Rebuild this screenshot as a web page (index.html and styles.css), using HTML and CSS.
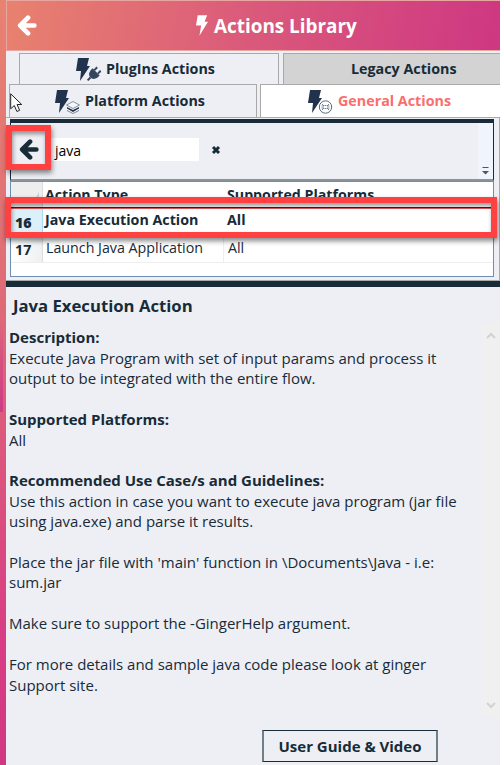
FILE: index.html
```html
<!DOCTYPE html>
<html lang="en">
<head>
<meta charset="utf-8">
<title>Actions Library</title>
<link rel="stylesheet" href="styles.css">
</head>
<body>
<svg width="0" height="0" class="defs">
  <defs>
    <symbol id="arrow" viewBox="0 0 20 20"><path d="M11.500 2.500 4 10l7.500 7.500M5 10h12.500" fill="none" stroke="currentColor" stroke-width="4.400" stroke-linecap="round" stroke-linejoin="round"/></symbol>
    <symbol id="bolt" viewBox="0 0 14 24"><path d="M2 0H13L10 7.500H14L4 24 6 12H0Z" fill="currentColor"/></symbol>
  </defs>
</svg>
<div class="window">
  <aside class="rail"><i></i></aside>
  <main class="panel">
    <header class="titlebar">
      <svg class="back"><use href="#arrow"/></svg>
      <svg class="title-bolt"><use href="#bolt"/></svg>
      <h1>Actions Library</h1>
    </header>
    <nav class="tabs">
      <div class="tab-row upper">
        <div class="tab plugins">
          <svg class="tab-icon" viewBox="0 0 26 25"><path d="M3 1h11l-2 8h3L5 24l1-10H1Z" fill="#21324d"/><g transform="translate(19 17) rotate(45)" fill="#34455d"><path d="M-5-3H5V0Q4 5 0 5T-5 0Z"/><path d="M-3.500-7h2v4h-2zM1.500-7h2v4h-2zM-1 5h2v4h-2z"/></g></svg>
          <span>PlugIns Actions</span>
        </div>
        <div class="tab legacy"><span>Legacy Actions</span></div>
      </div>
      <div class="tab-row lower">
        <div class="tab platform">
          <svg class="tab-icon" viewBox="0 0 26 25"><path d="M3 1h11l-2 8h3L5 24l1-10H1Z" fill="#21324d"/><path d="m12.500 16 6.500-3.500 6.500 3.500-6.500 3.500Z" fill="#f5f6fa" stroke="#8791a0"/><path d="m13 18 6 3 6-3v1.500L19 23l-6-3.500Z" fill="#21324d"/><path d="m13 21.500 6 3 6-3" fill="none" stroke="#7e8998"/></svg>
          <span>Platform Actions</span>
        </div>
        <div class="tab general">
          <svg class="tab-icon" viewBox="0 0 26 25"><path d="M3 1h11l-2 8h3L5 24l1-10H1Z" fill="#21324d"/><circle cx="18.500" cy="18" r="6.200" fill="#fff" stroke="#5c687d"/><path d="M15 15l2 2h-2.500m7.500-2-2 2h2.500M15 21l2-2h-2.500m7.500 2-2-2h2.500M17.500 16.500h2m-2 3h2" fill="none" stroke="#5c687d" stroke-width=".8"/></svg>
          <span>General Actions</span>
        </div>
      </div>
    </nav>
    <section class="list">
      <div class="toolbar">
        <svg class="tool-back"><use href="#arrow"/></svg>
        <div class="search">java</div>
        <svg class="clear" viewBox="0 0 10 10"><path d="m2 2 6 6m0-6L2 8" stroke="#172b38" stroke-width="3"/></svg>
        <div class="overflow"><svg viewBox="0 0 7 8"><path d="M.5.500h6" stroke="#555"/><path d="M0 4h7L3.500 7.500Z" fill="#555"/></svg></div>
      </div>
      <div class="grid">
        <div class="row head"><b class="num"><svg viewBox="0 0 6 11"><path d="M6 0v11H0Z" fill="#ccc"/></svg></b><span class="name">Action Type</span><span class="plat">Supported Platforms</span></div>
        <div class="row selected"><b class="num">16</b><span class="name">Java Execution Action</span><span class="plat">All</span></div>
        <div class="row plain"><b class="num">17</b><span class="name">Launch Java Application</span><span class="plat">All</span></div>
      </div>
      <div class="mark mark-back"></div>
      <div class="mark mark-row"></div>
    </section>
    <section class="details">
      <h2>Java Execution Action</h2>
      <div class="doc">
        <div class="copy">
          <h3>Description:</h3>
          <p>Execute Java Program with set of input params and process it<br>output to be integrated with the entire flow.</p>
          <h3>Supported Platforms:</h3>
          <p>All</p>
          <h3>Recommended Use Case/s and Guidelines:</h3>
          <p>Use this action in case you want to execute java program (jar file<br>using java.exe) and parse it results.</p>
          <p>Place the jar file with 'main' function in \Documents\Java - i.e:<br>sum.jar</p>
          <p>Make sure to support the -GingerHelp argument.</p>
          <p>For more details and sample java code please look at ginger<br>Support site.</p>
        </div>
        <div class="scroll"><svg viewBox="0 0 10 7"><path d="m1 6 4-4 4 4" fill="none" stroke="#d2d2d2" stroke-width="2"/></svg><svg viewBox="0 0 10 7"><path d="m1 1 4 4 4-4" fill="none" stroke="#d2d2d2" stroke-width="2"/></svg></div>
      </div>
      <button class="guide">User Guide &amp; Video</button>
    </section>
  </main>
</div>
<svg class="cursor" viewBox="0 0 13 20"><path d="M.7.800v15l3.600-3.300 2.600 6 2.700-1.200-2.500-5.800h4.600Z" fill="#fff" stroke="#222"/></svg>
</body>
</html>
```

FILE: styles.css
```css
* { box-sizing: border-box; }
body { margin: 0; background: #fff; color: #172b38; font: 15px/20.4px "Open Sans", "Noto Sans", sans-serif; }
svg { display: block; flex: none; }
h1, h2, h3, p { margin: 0; }
.defs { position: absolute; }
.window { display: flex; width: 500px; height: 765px; overflow: hidden; }
.rail { width: 6px; flex: none; background: linear-gradient(#e88272, #df6f76 35%, #d83c84 85%, #d03883); padding-top: 320px; }
.rail i { display: block; width: 3px; height: 92px; background: linear-gradient(#db667900, #cf3b87); }
.panel { width: 494px; background: #eeeff4; display: flex; flex-direction: column; }
.titlebar { height: 51px; flex: none; display: flex; align-items: center; border: solid #e9a5a0; border-width: 1px 0 1px 1px; background: linear-gradient(100deg, #e8826e, #da597b 50%, #ce3782); color: #fff; padding-left: 9px; }
.back { width: 21px; height: 21px; }
.title-bolt { width: 12px; height: 21px; margin-left: 159px; }
h1 { font-size: 18.9px; line-height: 24px; font-weight: 700; margin-left: 6px; white-space: nowrap; }
.tabs { flex: none; padding-top: 2px; height: 67px; border-bottom: 1px solid #aaa; }
.tab-row { display: flex; height: 31px; }
.upper { padding-left: 13px; gap: 4px; }
.lower { padding-left: 3px; gap: 3px; height: 33px; }
.tab { border: 1px solid #a9a9a9; border-bottom: 0; display: flex; align-items: center; font-weight: 700; font-size: 14.3px; white-space: nowrap; }
.tab-icon { width: 26px; height: 25px; }
.plugins { width: 260px; padding-left: 55px; }
.plugins span, .platform span, .general span { margin-left: 5px; }
.legacy { flex: 1; background: #d3d3d3; border-right: 0; padding-left: 67px; }
.platform { width: 248px; padding-left: 44px; }
.general { flex: 1; background: #fff; color: #fa6e6c; border-right: 0; padding-left: 46px; }
.list { position: relative; height: 163px; flex: none; padding: 1px 5px 0 4px; border-right: 1px solid #aaa; border-bottom: 1px solid #aaa; }
.toolbar { height: 62px; display: flex; align-items: center; border: solid #172b38; border-width: 4px 1px 2px; border-bottom-color: #8a9599; padding-left: 7px; }
.tool-back { width: 21px; height: 21px; margin-top: -3px; }
.search { width: 149px; height: 23px; background: #fff; margin: -3px 0 0 11px; padding: 3px 0 0 5px; font-size: 14px; color: #000; }
.clear { width: 10px; height: 10px; margin: -2px 0 0 12px; }
.overflow { width: 15px; height: 100%; margin-left: auto; background: #f0f4fc; padding: 44px 4px 0; }
.overflow svg { width: 7px; height: 8px; }
.grid { background: #fff; height: 96px; border: 1px solid #6d8fb3; }
.row { display: grid; grid-template-columns: 32px 181px 1fr; }
.num { background: linear-gradient(90deg, #fff, #eef0f2); border-right: 1px solid #ddd; padding-left: 4px; }
.head { height: 26px; font-weight: 700; font-size: 14.2px; border-bottom: 1px solid #172b38; overflow: hidden; }
.head .num { padding: 10px 0 0 22px; background: #eee; }
.head .num svg { width: 6px; height: 11px; }
.head span { padding-top: 3px; }
.name { padding-left: 2px; }
.plat { padding-left: 3px; }
.selected { height: 28px; font-weight: 700; font-size: 14.25px; border-top: 1px solid #d45c5c; }
.selected .num { background: #dcf0f9; border-color: #a5daf0; padding-top: 4px; }
.selected span { padding-top: 1px; }
.plain { height: 27px; font-size: 14.25px; border-bottom: 1px solid #eee; }
.plain .num { padding-top: 4px; }
.plain span { padding-top: 2px; }
.plain .name { padding-left: 3px; border-right: 1px solid #eee; }
.plain .plat { padding-left: 4px; }
.mark { position: absolute; border: 6px solid #ff4141; box-shadow: 1px 3px 5px #0007, inset 1px 3px 4px #0006; }
.mark-back { left: 0; top: 7px; width: 45px; height: 45px; }
.mark-row { left: -1px; top: 79px; width: 492px; height: 41px; }
.details { border-top: 6px solid #172b38; flex: 1; }
h2 { font-size: 16.7px; line-height: 22px; padding: 8px 0 0 7px; }
.doc { display: flex; justify-content: space-between; margin-top: 7px; height: 391px; }
.copy { padding: 3px 0 0 3px; white-space: nowrap; }
h3 { font-size: 15px; line-height: 20.4px; }
.copy p { position: relative; top: .5px; margin-bottom: 20.45px; }
.scroll { width: 19px; background: #f0f0f0; display: flex; flex-direction: column; justify-content: space-between; padding: 8px 4px 6px 5px; }
.scroll svg { width: 10px; height: 7px; }
.guide { display: block; width: 176px; height: 32px; margin: 15px 0 0 256px; padding: 0; background: transparent; border: solid; border-width: 1px 2px; border-color: #172b38 #718087; color: #172b38; font: 700 15px/20px "Open Sans", sans-serif; }
.cursor { position: absolute; left: 10px; top: 93px; width: 13px; height: 20px; }
```
